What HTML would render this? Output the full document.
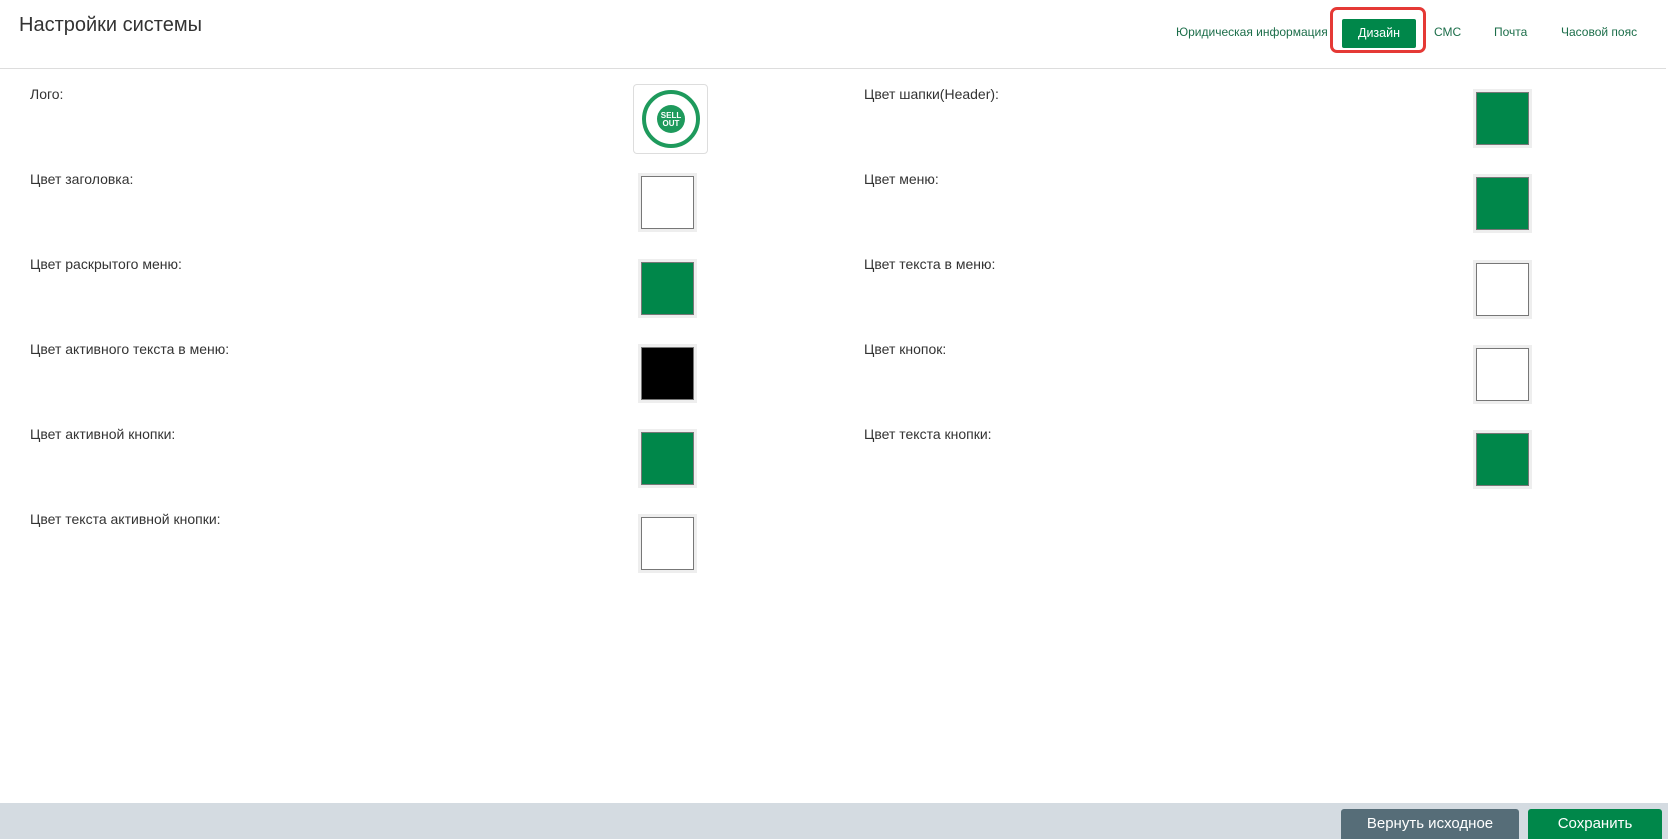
<!DOCTYPE html>
<html><head><meta charset="utf-8"><style>
*{margin:0;padding:0;box-sizing:border-box}
body{width:1668px;height:839px;position:relative;background:#fff;font-family:"Liberation Sans",sans-serif;overflow:hidden}
.t{position:absolute;left:19px;top:14px;font-size:20px;color:#333}
.nav{position:absolute;top:25px;font-size:12px;color:#1c6e4a}
.rb{position:absolute;left:1330px;top:7px;width:96px;height:46px;border:3px solid #e53935;border-radius:7px}
.gb{position:absolute;left:1342px;top:19px;width:74px;height:29px;background:#00874a;color:#fff;font-size:12.5px;text-align:center;line-height:29px;border-radius:2px}
.hr{position:absolute;left:0;top:68px;width:1666px;height:1px;background:#ddd}
.l{position:absolute;font-size:14px;color:#333}
.sw{position:absolute;width:59px;height:59px;background:#eee;padding:3px}
.sw div{width:100%;height:100%;border:1px solid #777}
.g div{background:#00874a}.w div{background:#fff}.k div{background:#000}
.ft{position:absolute;left:0;top:803px;width:1668px;height:36px;background:#d4dbe1}
.btn{position:absolute;top:809px;height:30px;color:#fff;font-size:15px;text-align:center;line-height:30px;border-radius:3px 3px 0 0}
</style></head><body>
<div class="t">Настройки системы</div>
<div class="nav" style="left:1176px">Юридическая информация</div>
<div class="rb"></div><div class="gb">Дизайн</div>
<div class="nav" style="left:1434px">СМС</div>
<div class="nav" style="left:1494px">Почта</div>
<div class="nav" style="left:1561px">Часовой пояс</div>
<div class="hr"></div>

<div class="l" style="left:30px;top:86px">Лого:</div>
<div style="position:absolute;left:633px;top:84px;width:75px;height:70px;border:1px solid #ddd;border-radius:4px;display:flex;align-items:center;justify-content:center">
<svg width="60" height="60" viewBox="0 0 60 60"><circle cx="30" cy="30" r="27" fill="none" stroke="#1e9a5c" stroke-width="4"/><circle cx="30" cy="30" r="14" fill="#1e9a5c"/><text x="30" y="29" font-size="8" fill="#fff" text-anchor="middle" font-family="Liberation Sans" font-weight="bold">SELL</text><text x="30" y="37" font-size="8" fill="#fff" text-anchor="middle" font-family="Liberation Sans" font-weight="bold">OUT</text></svg></div>

<div class="l" style="left:30px;top:171px">Цвет заголовка:</div>
<div class="sw w" style="left:638px;top:173px"><div></div></div>
<div class="l" style="left:30px;top:256px">Цвет раскрытого меню:</div>
<div class="sw g" style="left:638px;top:259px"><div></div></div>
<div class="l" style="left:30px;top:341px">Цвет активного текста в меню:</div>
<div class="sw k" style="left:638px;top:344px"><div></div></div>
<div class="l" style="left:30px;top:426px">Цвет активной кнопки:</div>
<div class="sw g" style="left:638px;top:429px"><div></div></div>
<div class="l" style="left:30px;top:511px">Цвет текста активной кнопки:</div>
<div class="sw w" style="left:638px;top:514px"><div></div></div>

<div class="l" style="left:864px;top:86px">Цвет шапки(Header):</div>
<div class="sw g" style="left:1473px;top:89px"><div></div></div>
<div class="l" style="left:864px;top:171px">Цвет меню:</div>
<div class="sw g" style="left:1473px;top:174px"><div></div></div>
<div class="l" style="left:864px;top:256px">Цвет текста в меню:</div>
<div class="sw w" style="left:1473px;top:260px"><div></div></div>
<div class="l" style="left:864px;top:341px">Цвет кнопок:</div>
<div class="sw w" style="left:1473px;top:345px"><div></div></div>
<div class="l" style="left:864px;top:426px">Цвет текста кнопки:</div>
<div class="sw g" style="left:1473px;top:430px"><div></div></div>

<div class="ft"></div>
<div class="btn" style="left:1341px;width:178px;background:#566d78">Вернуть исходное</div>
<div class="btn" style="left:1528px;width:134px;background:#00874a">Сохранить</div>
</body></html>
